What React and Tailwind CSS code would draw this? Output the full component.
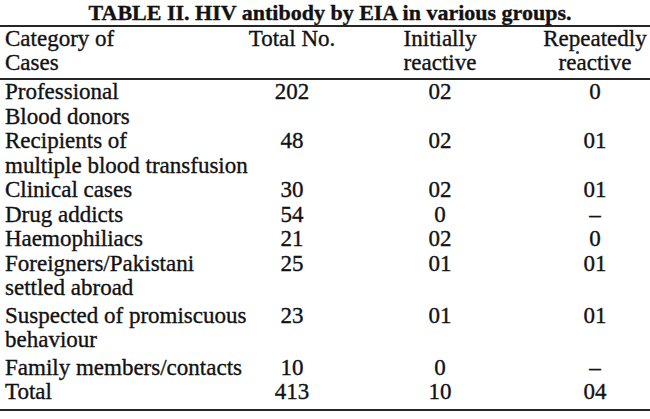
const rows = [
  { name: ["Professional", "Blood donors"], total: "202", initial: "02", repeat: "0" },
  { name: ["Recipients of", "multiple blood transfusion"], total: "48", initial: "02", repeat: "01" },
  { name: ["Clinical cases"], total: "30", initial: "02", repeat: "01" },
  { name: ["Drug addicts"], total: "54", initial: "0", repeat: "–" },
  { name: ["Haemophiliacs"], total: "21", initial: "02", repeat: "0" },
  { name: ["Foreigners/Pakistani", "settled abroad"], total: "25", initial: "01", repeat: "01", gap: true },
  { name: ["Suspected of promiscuous", "behaviour"], total: "23", initial: "01", repeat: "01", gap: true },
  { name: ["Family members/contacts"], total: "10", initial: "0", repeat: "–" },
  { name: ["Total"], total: "413", initial: "10", repeat: "04" },
];

const cols = "grid grid-cols-[241px_92px_204px_106px] pl-[5px]";

export default function App() {
  return (
    <div
      className="w-[650px] h-[419px] bg-white text-[#121212] overflow-hidden [-webkit-text-stroke:0.35px_#121212]"
      style={{ fontFamily: '"Liberation Serif", "Times New Roman", serif' }}
    >
      <h1 className="h-[25px] leading-[25px] text-[22px] font-bold text-center pl-[10px] whitespace-nowrap">
        TABLE II. HIV antibody by EIA in various groups.
      </h1>

      <div className="border-t-2 border-[#262626]" />

      {/* header */}
      <div className={`${cols} text-[23px] leading-[24px] h-[51px]`}>
        <div>
          <div>Category of</div>
          <div>Cases</div>
        </div>
        <div className="text-center">Total No.</div>
        <div className="text-center">
          <div>Initially</div>
          <div>reactive</div>
        </div>
        <div className="relative text-center">
          <div>Repeatedly</div>
          <div>reactive</div>
          <span className="absolute left-[34px] top-[24px] w-[3px] h-[3px] rounded-full bg-[#333]" />
        </div>
      </div>

      <div className="border-t-2 border-[#262626]" />

      {/* body */}
      <div className="text-[23px] leading-[24.5px] pb-[4px]">
        {rows.map((r, i) => (
          <div key={i} className={`${cols} ${r.gap ? "pb-[3px]" : ""}`}>
            <div className="whitespace-nowrap">
              {r.name.map((line, j) => (
                <div key={j}>{line}</div>
              ))}
            </div>
            <div className="text-center">{r.total}</div>
            <div className="text-center">{r.initial}</div>
            <div className="text-center">{r.repeat}</div>
          </div>
        ))}
      </div>

      <div className="border-t-2 border-[#262626]" />
    </div>
  );
}
